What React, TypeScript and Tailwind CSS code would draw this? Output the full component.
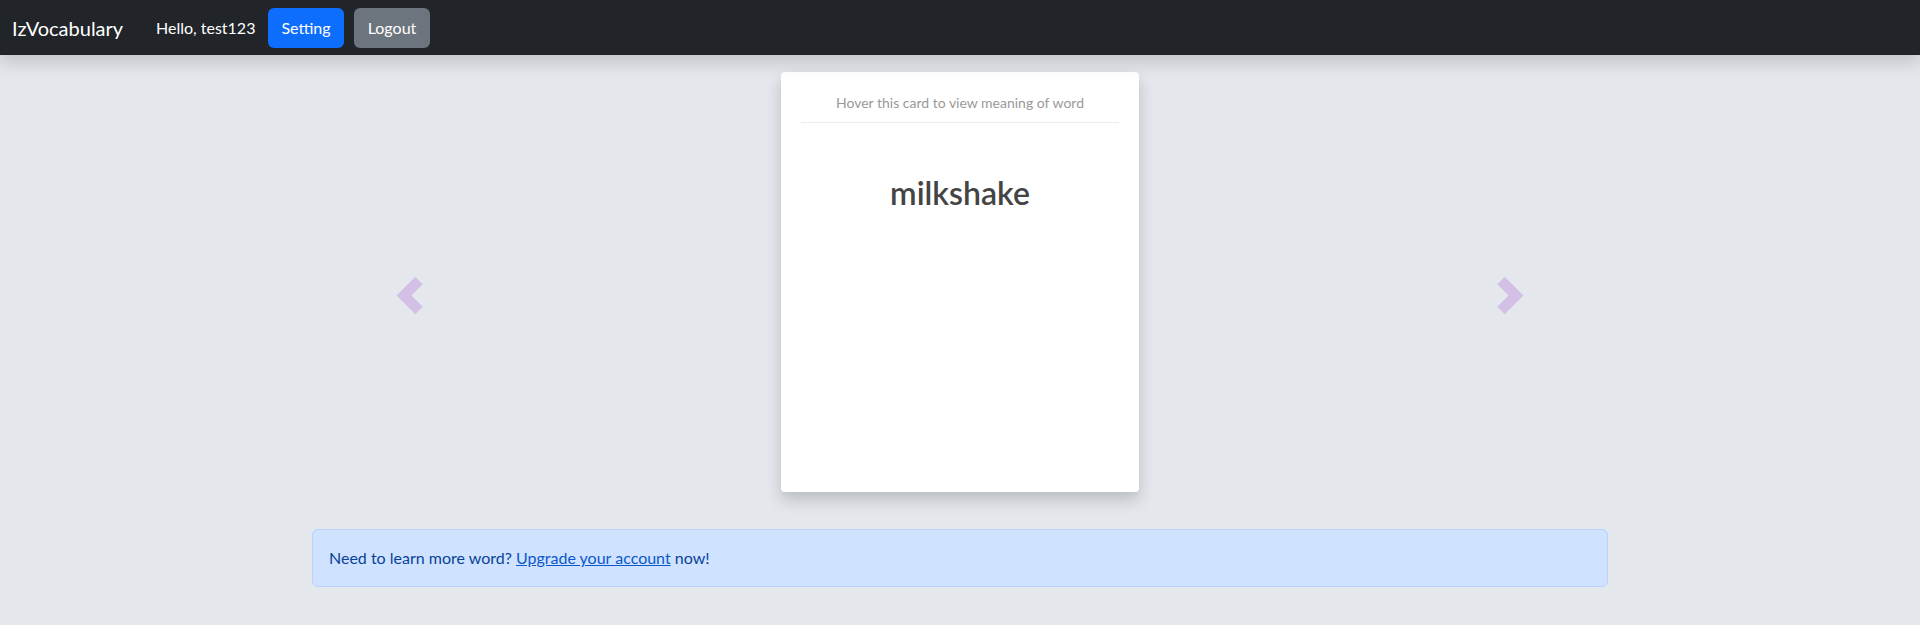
import React from 'react';

function Chevron({ dir }: { dir: 'left' | 'right' }) {
  const pts = dir === 'left' ? '23,4.5 8,19.5 23,34.5' : '4,4.5 19,19.5 4,34.5';
  return (
    <svg width="27" height="39" viewBox="0 0 27 39" className="shrink-0">
      <polyline points={pts} fill="none" stroke="#d4bfe6" strokeWidth={10.5} strokeLinejoin="miter" strokeLinecap="butt" />
    </svg>
  );
}

export default function App() {
  return (
    <div className="min-h-[625px] bg-[#e4e7eb] font-['Lato',sans-serif]">
      {/* Navbar */}
      <nav className="relative z-10 flex h-[55px] items-center bg-[#212529] px-3 shadow-[0_8px_16px_rgba(0,0,0,0.15)]">
        <span className="w-[144px] text-[20px] text-white">IzVocabulary</span>
        <span className="w-[112px] text-[16px] text-white">Hello, test123</span>
        <button className="h-10 w-[76px] rounded-[6px] bg-[#0d6efd] text-[16px] text-white">Setting</button>
        <button className="ml-[10px] h-10 w-[76px] rounded-[6px] bg-[#6c757d] text-[16px] text-white">Logout</button>
      </nav>

      {/* Flashcard */}
      <div className="mt-[17px] flex justify-center gap-[358px]">
        <div className="flex items-center pt-[27px]">
          <Chevron dir="left" />
        </div>
        <div className="h-[420px] w-[358px] rounded-[4px] bg-white px-5 pt-5 shadow-[0_8px_16px_rgba(0,0,0,0.18)]">
          <p className="text-center text-[14px] leading-[21px] text-[#999]">Hover this card to view meaning of word</p>
          <div className="mt-[9px] border-t border-[#eaecef]" />
          <h2 className="mt-[51px] text-center text-[32px] font-semibold leading-[38px] text-[#444]">milkshake</h2>
        </div>
        <div className="flex items-center pt-[27px]">
          <Chevron dir="right" />
        </div>
      </div>

      {/* Alert */}
      <div className="mx-auto mt-[37px] w-[1296px] rounded-[6px] border border-[#b6d4fe] bg-[#cfe2ff] px-4 py-4 text-[16px] leading-6 text-[#084298]">
        Need to learn more word? <a href="#" className="text-[#0a58ca] underline">Upgrade your account</a> now!
      </div>
    </div>
  );
}
